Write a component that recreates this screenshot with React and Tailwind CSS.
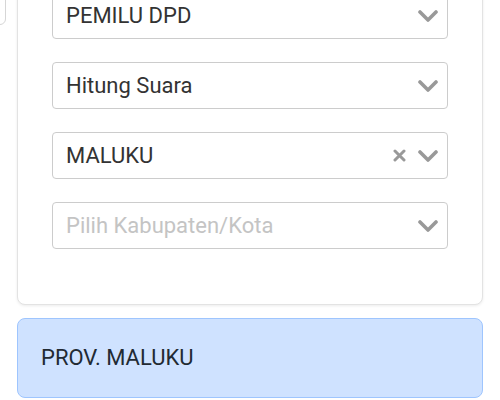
import { useState } from 'react';

const Chevron = () => (
  <svg width="20" height="12" viewBox="0 0 20 12" className="shrink-0">
    <path d="M2 2 L10 10 L18 2" fill="none" stroke="#999999" strokeWidth="3.6" strokeLinecap="round" strokeLinejoin="round" />
  </svg>
);

const Cross = () => (
  <svg width="13" height="13" viewBox="0 0 13 13" className="shrink-0">
    <path d="M2 2 L11 11 M11 2 L2 11" fill="none" stroke="#999999" strokeWidth="3" strokeLinecap="round" />
  </svg>
);

const Select = ({ value, placeholder, clearable }) => (
  <div className="flex items-center h-[47px] border border-[#cccccc] rounded-[4px] bg-white pl-[13px] pr-[9px]">
    <span className={`flex-1 text-[22px] leading-6 ${value ? 'text-[#333333]' : 'text-[#c4c4c4]'}`}>
      {value || placeholder}
    </span>
    {clearable && (
      <span className="mr-[12px] flex items-center">
        <Cross />
      </span>
    )}
    <Chevron />
  </div>
);

export default function App() {
  const [pemilu] = useState('PEMILU DPD');
  const [jenis] = useState('Hitung Suara');
  const [provinsi] = useState('MALUKU');

  return (
    <div className="relative w-[500px] h-[400px] overflow-hidden bg-white font-['Roboto',sans-serif]">
      {/* bit of the previous button peeking in at the top left */}
      <div className="absolute -left-[20px] -top-[10px] w-[26px] h-[35px] border border-[#d6d6d6] rounded-br-[6px]" />

      <div className="px-[17px] -mt-[30px]">
        <div className="bg-white border border-[#e3e3e3] rounded-[8px] shadow-[0_1px_3px_rgba(0,0,0,0.08)] px-[34px] pt-[21px] pb-[55px] flex flex-col gap-[23px]">
          <Select value={pemilu} />
          <Select value={jenis} />
          <Select value={provinsi} clearable />
          <Select placeholder="Pilih Kabupaten/Kota" />
        </div>

        <div className="mt-[13px] bg-[#cfe2ff] border border-[#9ec5fe] rounded-[8px] px-[23px] py-[27px]">
          <p className="text-[22px] leading-6 text-[#222a33]">PROV. MALUKU</p>
        </div>
      </div>
    </div>
  );
}
